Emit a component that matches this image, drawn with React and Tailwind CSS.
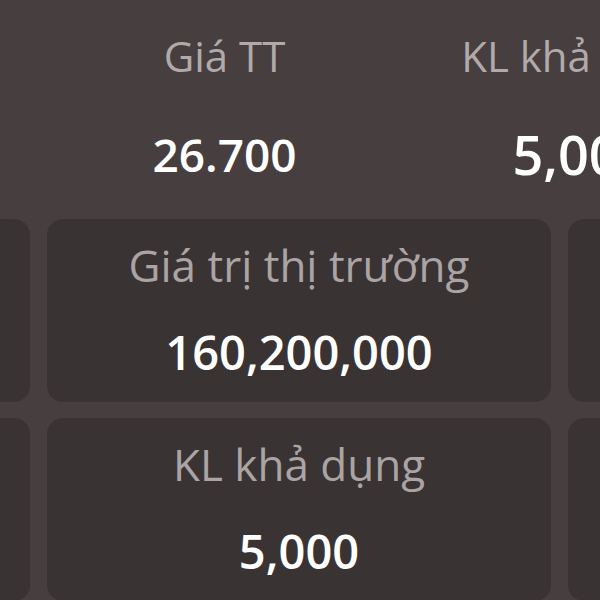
import React from 'react'

const TOP_COLUMNS = [
  { label: 'Giá TT', value: '26.700', size: 'text-[46px]' },
  { label: 'KL khả dụng', value: '5,000', size: 'text-[54px]' }
]

const CARD_ROWS = [
  { label: 'Giá trị thị trường', value: '160,200,000' },
  { label: 'KL khả dụng', value: '5,000' }
]

function StatCard({ label, value }) {
  return (
    <div className="w-[504px] h-[183px] shrink-0 rounded-[16px] bg-[#3a3334] pt-[20px] pb-[22px] text-center">
      {label && (
        <>
          <div className="text-[44px] leading-[52px] text-[#aaa4a4] whitespace-nowrap">{label}</div>
          <div className="mt-[33px] text-[47px] leading-[56px] font-semibold text-white whitespace-nowrap">
            {value}
          </div>
        </>
      )}
    </div>
  )
}

export default function App() {
  return (
    <div
      className="w-[600px] h-[600px] overflow-hidden bg-[#473e3f]"
      style={{ fontFamily: '"Open Sans", "Noto Sans", sans-serif' }}
    >
      {/* Header row */}
      <div className="flex ml-[46px] pt-[31px]">
        {TOP_COLUMNS.map((col) => (
          <div key={col.label} className="w-[357px] shrink-0 text-center">
            <div className="text-[42px] leading-[50px] text-[#b0aaaa] whitespace-nowrap">{col.label}</div>
            <div className={`mt-[45px] ${col.size} leading-[56px] font-semibold text-white whitespace-nowrap`}>
              {col.value}
            </div>
          </div>
        ))}
      </div>

      {/* Cards: neighbours peek in from both sides */}
      <div className="mt-[37px] flex flex-col gap-[16px]">
        {CARD_ROWS.map((c) => (
          <div key={c.label} className="flex gap-[17px] ml-[-474px]">
            <StatCard />
            <StatCard label={c.label} value={c.value} />
            <StatCard />
          </div>
        ))}
      </div>
    </div>
  )
}
